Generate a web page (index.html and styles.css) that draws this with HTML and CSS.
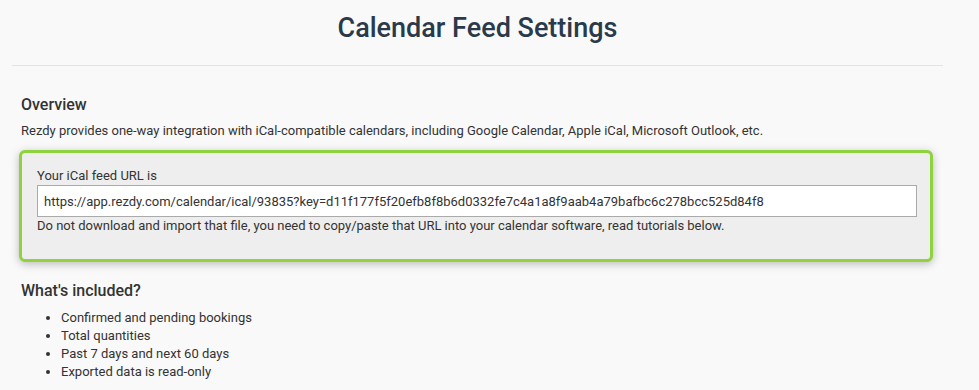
FILE: index.html
```html
<!DOCTYPE html>
<html>
<head>
<meta charset="utf-8">
<link rel="stylesheet" href="styles.css">
</head>
<body>
<div class="page">
  <h1 class="title">Calendar Feed Settings</h1>
  <div class="content">
    <h3 class="section-title">Overview</h3>
    <p class="text">Rezdy provides one-way integration with iCal-compatible calendars, including Google Calendar, Apple iCal, Microsoft Outlook, etc.</p>
    <div class="feed-box">
      <label class="label">Your iCal feed URL is</label>
      <input class="url-input" type="text" value="https://app.rezdy.com/calendar/ical/93835?key=d11f177f5f20efb8f8b6d0332fe7c4a1a8f9aab4a79bafbc6c278bcc525d84f8" readonly>
      <p class="help">Do not download and import that file, you need to copy/paste that URL into your calendar software, read tutorials below.</p>
    </div>
    <h3 class="section-title included">What's included?</h3>
    <ul class="list">
      <li>Confirmed and pending bookings</li>
      <li>Total quantities</li>
      <li>Past 7 days and next 60 days</li>
      <li>Exported data is read-only</li>
    </ul>
  </div>
</div>
</body>
</html>
```
FILE: styles.css
```css
html, body {
  margin: 0;
  padding: 0;
  background: #f9f9f9;
  font-family: Roboto, "Liberation Sans", sans-serif;
  color: #333;
}
.page {
  width: 931px;
  margin-left: 12px;
}
.title {
  margin: 0;
  padding-top: 12px;
  height: 66px;
  box-sizing: border-box;
  border-bottom: 1px solid #e3e3e3;
  text-align: center;
  font-size: 27px;
  font-weight: 500;
  line-height: 32px;
  color: #2b3a4a;
}
.content {
  padding: 0 10px 0 7px;
}
.section-title {
  margin: 29px 0 0 2px;
  font-size: 16px;
  font-weight: 500;
  line-height: 20px;
  color: #333;
}
.text {
  margin: 7px 0 0 2px;
  font-size: 13px;
  line-height: 18px;
}
.feed-box {
  margin-top: 10px;
  border: 3px solid #8ed23d;
  border-radius: 6px;
  background: #eeeeee;
  box-shadow: 0 2px 8px rgba(0,0,0,0.25);
  padding: 14px 13px 24px 15px;
  display: flex;
  flex-direction: column;
}
.label {
  font-size: 13px;
  line-height: 18px;
}
.url-input {
  margin: 0;
  height: 32px;
  box-sizing: border-box;
  border: 1px solid #aaa;
  background: #fff;
  padding: 0 6px;
  font-family: Roboto, "Liberation Sans", sans-serif;
  font-size: 13px;
  color: #333;
  outline: none;
}
.help {
  margin: 0;
  font-size: 13px;
  line-height: 18px;
}
.included {
  margin-top: 19px;
  font-size: 16px;
}
.list {
  margin: 8px 0 0 0;
  padding-left: 42px;
  font-size: 13px;
  line-height: 18px;
}
```
